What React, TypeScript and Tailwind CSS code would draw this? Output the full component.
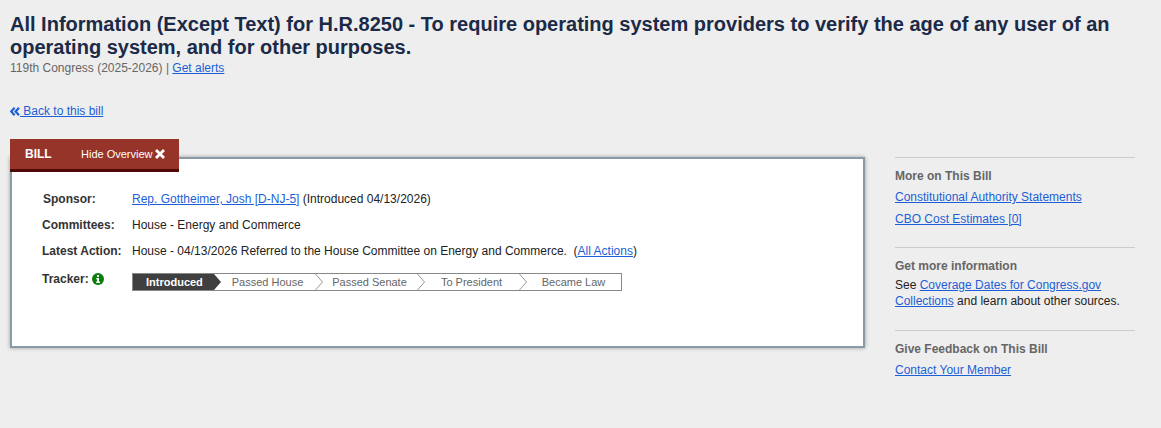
import React from 'react';

const steps = ['Passed House', 'Passed Senate', 'To President', 'Became Law'];
const linkCls = 'text-[#1d5fd6] underline';

function Row({ label, children }: { label: React.ReactNode; children: React.ReactNode }) {
  return (
    <div className="flex items-start h-[26px]">
      <div className="w-[90px] font-bold text-[#333]">{label}</div>
      <div className="text-[#222]">{children}</div>
    </div>
  );
}

function Tracker() {
  return (
    <div className="flex w-[490px] h-[18px] border border-[#888] bg-white text-[11px] leading-[16px] mt-[1px]">
      <div className="relative w-[81px] shrink-0 bg-[#3f3f3f] text-white font-bold pl-[13px]">
        Introduced
        <svg className="absolute left-[81px] top-0" width="8" height="16" viewBox="0 0 8 16">
          <path d="M0 0 L7 8 L0 16 Z" fill="#3f3f3f" />
        </svg>
      </div>
      {steps.map((s, i) => (
        <div key={s} className="relative w-[102px] shrink-0 text-center text-[#666] pl-[5px]">
          {s}
          {i < 3 && (
            <svg className="absolute right-[-8px] top-0" width="9" height="16" viewBox="0 0 9 16">
              <path d="M0.5 0 L7.5 8 L0.5 16" fill="none" stroke="#999" />
            </svg>
          )}
        </div>
      ))}
    </div>
  );
}

function SideBlock({ title, children }: { title: string; children: React.ReactNode }) {
  return (
    <div className="border-t border-[#ccc] pt-[10px] text-[12px] leading-[16px] text-[#222]">
      <h3 className="font-bold text-[#666] mb-[5px]">{title}</h3>
      {children}
    </div>
  );
}

export default function App() {
  return (
    <div className="min-h-[428px] bg-[#eeeeee] px-[10px] pt-[13px] text-[12px] overflow-hidden" style={{ fontFamily: '"Liberation Sans", Arial, sans-serif' }}>
      <h1 className="text-[20px] leading-[23px] font-bold text-[#1b2a47] w-[1120px]">
        All Information (Except Text) for H.R.8250 - To require operating system providers to verify the age of any user of an operating system, and for other purposes.
      </h1>
      <p className="text-[12px] leading-[16px] text-[#666] mt-[1px]">
        119th Congress (2025-2026) | <a className={linkCls}>Get alerts</a>
      </p>

      <a className={`${linkCls} flex items-center mt-[28px] leading-[14px] w-fit`}>
        <svg width="10" height="9" viewBox="0 0 10 9" fill="none" stroke="#1d5fd6" strokeWidth="2.2">
          <path d="M4.6 0.8 L1.2 4.5 L4.6 8.2" />
          <path d="M9 0.8 L5.6 4.5 L9 8.2" />
        </svg>
        <span className="whitespace-pre"> Back to this bill</span>
      </a>

      <div className="flex items-start mt-[21px]">
        <div className="w-[855px] shrink-0">
          <div className="relative z-10 flex items-center w-[169px] h-[33px] -mb-[15px] bg-[#96342a] border-b-[3px] border-[#4f0a05] text-white">
            <span className="font-bold text-[12px] ml-[15px] w-[56px]">BILL</span>
            <span className="text-[11px] font-normal">Hide Overview</span>
            <svg className="ml-[2px]" width="10" height="10" viewBox="0 0 10 10" stroke="#fff" strokeWidth="2.8">
              <path d="M1 1 L9 9 M9 1 L1 9" />
            </svg>
          </div>
          <div className="h-[191px] bg-white border-[2px] border-[#8a9ba8] shadow-[0_0_4px_rgba(0,0,0,0.35)] pl-[30px] pt-[31px]">
            <Row label={<span className="ml-px">Sponsor:</span>}>
              <a className={linkCls}>Rep. Gottheimer, Josh [D-NJ-5]</a> (Introduced 04/13/2026)
            </Row>
            <Row label="Committees:">House - Energy and Commerce</Row>
            <div className="h-[30px]">
              <Row label="Latest Action:">
                House - 04/13/2026 Referred to the House Committee on Energy and Commerce.&nbsp; (<a className={linkCls}>All Actions</a>)
              </Row>
            </div>
            <div className="flex items-start">
              <div className="w-[90px] font-bold text-[#333] flex items-center gap-[3px] h-[14px]">
                Tracker:
                <svg width="12" height="12" viewBox="0 0 12 12">
                  <circle cx="6" cy="6" r="6" fill="#0a7d0a" />
                  <rect x="5" y="2" width="2" height="2" fill="#fff" />
                  <path d="M4.2 5H7V8.6H8V10H4.2V8.6H5.2V6.2H4.2Z" fill="#fff" />
                </svg>
              </div>
              <Tracker />
            </div>
          </div>
        </div>

        <aside className="w-[240px] shrink-0 ml-[30px] mt-[18px]">
          <SideBlock title="More on This Bill">
            <div className="flex flex-col items-start gap-[6px]">
              <a className={linkCls}>Constitutional Authority Statements</a>
              <a className={linkCls}>CBO Cost Estimates [0]</a>
            </div>
            <div className="h-[20px]" />
          </SideBlock>
          <SideBlock title="Get more information">
            <p className="-mt-[2px]">
              See <a className={linkCls}>Coverage Dates for Congress.gov Collections</a> and learn about other sources.
            </p>
            <div className="h-[21px]" />
          </SideBlock>
          <SideBlock title="Give Feedback on This Bill">
            <a className={linkCls}>Contact Your Member</a>
          </SideBlock>
        </aside>
      </div>
    </div>
  );
}
